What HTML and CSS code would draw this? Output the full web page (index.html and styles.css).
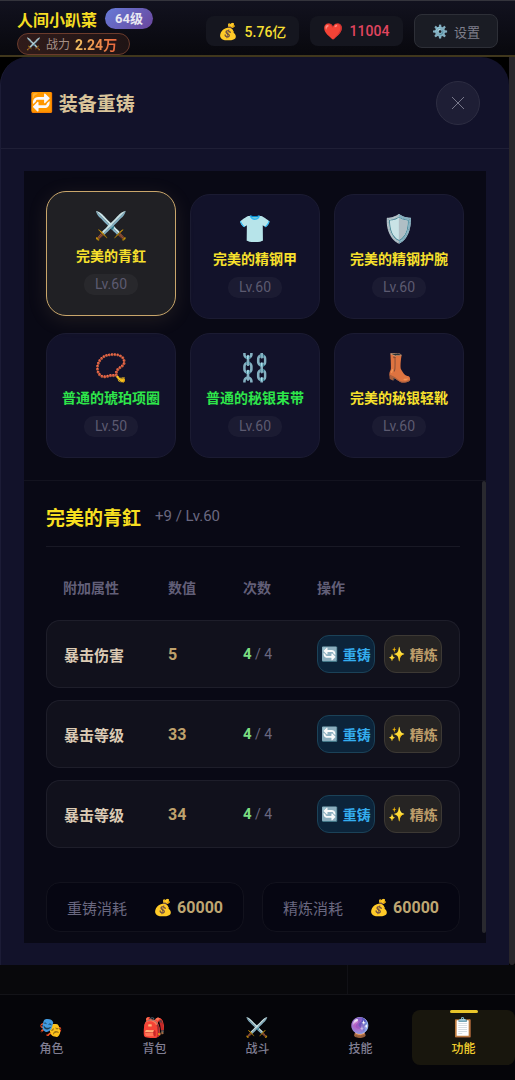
FILE: index.html
```
<!DOCTYPE html>
<html lang="zh-CN">
<head>
  <meta charset="UTF-8" />
  <meta name="viewport" content="width=device-width, initial-scale=1.0"/>
  <title>装备重铸</title>
  <link rel="stylesheet" href="styles.css">
</head>
<body>

  <header class="topbar">
    <div class="player">
      <div class="player-line">
        <span class="player-name">人间小趴菜</span>
        <span class="player-level">64级</span>
      </div>
      <div class="power"><span class="power-icon">⚔️</span> 战力 <b>2.24万</b></div>
    </div>
    <div class="wallet">
      <div class="coin gold"><span class="emoji">💰</span>5.76亿</div>
      <div class="coin life"><span class="emoji">❤️</span>11004</div>
      <button class="settings"><span class="emoji">⚙️</span>设置</button>
    </div>
  </header>

  <main class="stage">
    <section class="panel">
      <div class="panel-head">
        <h1><span class="emoji">🔁</span>装备重铸</h1>
        <button class="close" aria-label="关闭">
          <svg viewBox="0 0 14 14"><path d="M1 1L13 13M13 1L1 13"/></svg>
        </button>
      </div>

      <div class="panel-body">
        <div class="items">
          <button class="item active"><span class="item-icon">⚔️</span><span class="item-name">完美的青釭</span><span class="item-lv">Lv.60</span></button>
          <button class="item"><span class="item-icon">👕</span><span class="item-name">完美的精钢甲</span><span class="item-lv">Lv.60</span></button>
          <button class="item"><span class="item-icon">🛡️</span><span class="item-name">完美的精钢护腕</span><span class="item-lv">Lv.60</span></button>
          <button class="item common"><span class="item-icon">📿</span><span class="item-name">普通的琥珀项圈</span><span class="item-lv">Lv.50</span></button>
          <button class="item common"><span class="item-icon">⛓️</span><span class="item-name">普通的秘银束带</span><span class="item-lv">Lv.60</span></button>
          <button class="item"><span class="item-icon">👢</span><span class="item-name">完美的秘银轻靴</span><span class="item-lv">Lv.60</span></button>
        </div>

        <div class="detail-wrap">
          <div class="detail">
            <div class="detail-head">
              <h2>完美的青釭</h2>
              <span>+9 / Lv.60</span>
            </div>

            <table class="attrs">
              <thead>
                <tr><th class="col-name">附加属性</th><th class="col-value">数值</th><th class="col-count">次数</th><th>操作</th></tr>
              </thead>
              <tbody>
                <tr>
                  <td class="attr">暴击伤害</td><td class="value">5</td><td class="count"><b>4</b> / 4</td>
                  <td><div class="actions"><button class="reforge"><span class="emoji">🔄</span>重铸</button><button class="refine"><span class="emoji">✨</span>精炼</button></div></td>
                </tr>
                <tr>
                  <td class="attr">暴击等级</td><td class="value">33</td><td class="count"><b>4</b> / 4</td>
                  <td><div class="actions"><button class="reforge"><span class="emoji">🔄</span>重铸</button><button class="refine"><span class="emoji">✨</span>精炼</button></div></td>
                </tr>
                <tr>
                  <td class="attr">暴击等级</td><td class="value">34</td><td class="count"><b>4</b> / 4</td>
                  <td><div class="actions"><button class="reforge"><span class="emoji">🔄</span>重铸</button><button class="refine"><span class="emoji">✨</span>精炼</button></div></td>
                </tr>
              </tbody>
            </table>

            <div class="costs">
              <div class="cost"><span>重铸消耗</span><b><span class="emoji">💰</span>60000</b></div>
              <div class="cost"><span>精炼消耗</span><b><span class="emoji">💰</span>60000</b></div>
            </div>
          </div>
          <div class="thumb"></div>
        </div>
      </div>
    </section>
    <div class="page-thumb"></div>
  </main>

  <div class="backdrop"><div></div><div></div></div>

  <nav class="tabs">
    <a href="#role"><span class="tab-icon">🎭</span>角色</a>
    <a href="#bag"><span class="tab-icon">🎒</span>背包</a>
    <a href="#fight"><span class="tab-icon">⚔️</span>战斗</a>
    <a href="#skill"><span class="tab-icon">🔮</span>技能</a>
    <a href="#more" class="active"><span class="tab-icon">📋</span>功能</a>
  </nav>

</body>
</html>
```
FILE: styles.css
```
* { box-sizing: border-box; }

body {
  margin: 0;
  min-height: 100vh;
  display: flex;
  flex-direction: column;
  background: #060609;
  color: #6a6880;
  font-family: Roboto, "Noto Sans CJK SC", "Noto Color Emoji", sans-serif;
  font-size: 15px;
}

h1, h2 { margin: 0; }

button {
  font-family: inherit;
  padding: 0;
  cursor: pointer;
}

/* top bar */
.topbar {
  display: flex;
  justify-content: space-between;
  align-items: center;
  height: 57px;
  padding: 0 17px;
  border-top: 1px solid #34343c;
  border-bottom: 2px solid #40371c;
  background: linear-gradient(#12121f, #08080d);
}

.player-line {
  display: flex;
  align-items: center;
  gap: 8px;
  height: 22px;
  margin-top: 6px;
}

.player-name {
  color: #f5dd22;
  font-size: 16px;
  font-weight: bold;
}

.player-level {
  height: 21px;
  padding: 0 10px;
  border-radius: 11px;
  background: linear-gradient(135deg, #667bd8, #6a459c);
  color: #e8e8f2;
  font-size: 13px;
  font-weight: bold;
  line-height: 21px;
}

.power {
  display: flex;
  align-items: center;
  gap: 5px;
  width: fit-content;
  height: 22px;
  margin-top: 3px;
  padding: 0 12px 0 8px;
  border: 1px solid #6b3b2c;
  border-radius: 11px;
  background: linear-gradient(90deg, #301b1a, #1f1415);
  color: #a58f86;
  font-size: 12px;
}

.power b {
  background: linear-gradient(90deg, #f5c563, #e8643c);
  background-clip: text;
  color: transparent;
  font-size: 14px;
}

.power-icon { font-size: 12px; }

.wallet {
  display: flex;
  align-items: center;
  gap: 11px;
  margin-top: 6px;
}

.coin, .settings {
  display: flex;
  align-items: center;
  justify-content: center;
  gap: 6px;
  border-radius: 8px;
}

.coin {
  width: 93px;
  height: 30px;
  background: #15161f;
  font-size: 14px;
  font-weight: 500;
}

.coin .emoji { font-size: 16px; }
.gold { color: #f5df32; }
.life { color: #e0455f; }

.settings {
  width: 84px;
  height: 34px;
  border: 1px solid #2d2f37;
  background: #1a1c24;
  color: #7f7f8b;
  font-size: 13px;
}

/* reforge panel */
.stage {
  display: flex;
  background: #000;
}

.panel {
  flex: 1;
  padding: 0 23px 22px;
  border-left: 1px solid #1c1c36;
  border-radius: 28px 28px 0 0;
  background: #12122a;
}

.page-thumb {
  width: 6px;
  border-radius: 0 0 3px 3px;
  background: #29262b;
}

.panel-head {
  display: flex;
  justify-content: space-between;
  align-items: center;
  height: 92px;
  margin: 0 -23px 22px;
  padding: 0 29px;
  border-bottom: 1px solid #1f1f36;
}

h1 {
  display: flex;
  align-items: center;
  gap: 5px;
  color: #d9c49a;
  font-size: 19px;
}

.close {
  display: grid;
  place-items: center;
  width: 44px;
  height: 44px;
  border: 1px solid #2d2d42;
  border-radius: 50%;
  background: #1e1e35;
}

.close svg {
  width: 14px;
  fill: none;
  stroke: #77778a;
}

.panel-body {
  padding-bottom: 10px;
  background: #090915;
}

.items {
  display: grid;
  grid-template-columns: repeat(3, 1fr);
  gap: 14px;
  padding: 23px 22px 22px;
  border-bottom: 1px solid #13131f;
}

.item {
  display: flex;
  flex-direction: column;
  align-items: center;
  height: 125px;
  padding-top: 15px;
  border: 1px solid #1b1b32;
  border-radius: 20px;
  background: #12122a;
}

.item.active {
  transform: translateY(-3px);
  border-color: #c9a66b;
  background: #202024;
  box-shadow: 0 4px 20px rgba(201, 166, 107, 0.12);
}

.item-icon {
  height: 38px;
  font-size: 27px;
  line-height: 38px;
}

.item-name {
  height: 22px;
  color: #f7e02c;
  font-size: 14px;
  font-weight: bold;
  line-height: 22px;
  white-space: nowrap;
}

.common .item-name { color: #2ee64a; }

.item-lv {
  margin-top: 7px;
  padding: 0 11px;
  border-radius: 10px;
  background: rgba(255, 255, 255, 0.04);
  color: #5c5a70;
  font-size: 14px;
  line-height: 21px;
}

.detail-wrap { display: flex; }

.detail {
  flex: 1;
  padding: 0 22px 1px;
}

.thumb {
  width: 4px;
  border-radius: 2px;
  background: #29292f;
}

.detail-head {
  display: flex;
  align-items: center;
  gap: 14px;
  height: 66px;
  padding-top: 5px;
  border-bottom: 1px solid #191925;
}

h2 {
  color: #f7df20;
  font-size: 19px;
}

.attrs {
  width: 100%;
  margin-top: 15px;
  border-collapse: separate;
  border-spacing: 0 12px;
  table-layout: fixed;
  text-align: left;
}

.col-name { width: 105px; }
.col-value { width: 75px; }
.col-count { width: 74px; }

.attrs th {
  height: 34px;
  padding: 0 17px 8px;
  color: #625f78;
  font-size: 14px;
}

.attrs td {
  height: 68px;
  padding: 0 0 0 17px;
  border: 1px solid #1e1e2a;
  border-width: 1px 0;
  background: #11111c;
}

.attrs td:first-child {
  border-left-width: 1px;
  border-radius: 14px 0 0 14px;
}

.attrs td:last-child {
  border-right-width: 1px;
  border-radius: 0 14px 14px 0;
}

.attrs .attr {
  color: #dccbb4;
  font-weight: bold;
}

.attrs .value {
  color: #bfa16c;
  font-size: 16px;
  font-weight: bold;
}

.count { font-size: 14px; }

.count b {
  color: #7bdc82;
  font-size: 15px;
}

.actions {
  display: flex;
  gap: 9px;
}

.actions button {
  display: flex;
  align-items: center;
  justify-content: center;
  gap: 4px;
  width: 58px;
  height: 38px;
  border-radius: 12px;
  font-size: 14px;
  font-weight: bold;
  white-space: nowrap;
}

.reforge {
  border: 1px solid #1b4258;
  background: #0c243a;
  color: #34aef0;
}

.refine {
  border: 1px solid #3d3934;
  background: #262423;
  color: #bf9f6b;
}

.costs {
  display: flex;
  gap: 18px;
  margin-top: 22px;
}

.cost {
  flex: 1;
  display: flex;
  justify-content: space-between;
  align-items: center;
  height: 50px;
  padding: 0 20px;
  border: 1px solid #12121d;
  border-radius: 14px;
  background: #060612;
}

.cost b {
  display: flex;
  align-items: center;
  gap: 4px;
  color: #bfa672;
  font-size: 16px;
}

/* strip of the page behind the panel */
.backdrop {
  flex: 1;
  display: flex;
  background: #08080b;
}

.backdrop div:first-child {
  width: 348px;
  border-right: 1px solid #111116;
}

/* bottom tabs */
.tabs {
  display: flex;
  height: 86px;
  padding-top: 15px;
  border-top: 1px solid #131318;
  background: #050509;
}

.tabs a {
  position: relative;
  flex: 1;
  display: flex;
  flex-direction: column;
  align-items: center;
  height: 55px;
  padding-top: 5px;
  border-radius: 8px;
  color: #807e92;
  font-size: 12px;
  font-weight: 500;
  line-height: 19px;
  text-decoration: none;
}

.tab-icon {
  font-size: 19px;
  line-height: 25px;
}

.tabs .active {
  background: #18160d;
  color: #f2cf2e;
}

.tabs .active::before {
  content: "";
  position: absolute;
  top: 0;
  width: 28px;
  height: 3px;
  border-radius: 2px;
  background: #e8c52a;
}
```
